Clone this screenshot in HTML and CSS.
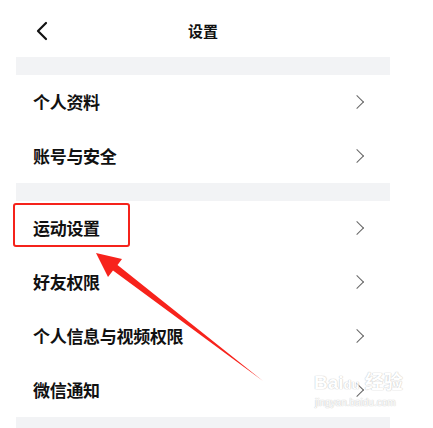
FILE: index.html
```html
<!DOCTYPE html>
<html lang="zh-CN">
<head>
    <meta charset="UTF-8">
    <meta name="viewport" content="width=device-width, initial-scale=1.0">
    <title>设置</title>
    <link rel="stylesheet" href="styles.css">
</head>
<body>
    <div class="pantalla">
        <div class="cabecera">
            <svg class="atras" width="14" height="20" viewBox="0 0 14 20">
                <path d="M11 2 L3 10 L11 18" fill="none" stroke="#111" stroke-width="2.2" stroke-linecap="round" stroke-linejoin="round"/>
            </svg>
            <span class="titulo">设置</span>
        </div>

        <div class="banda"></div>
        <div class="fila"><span>个人资料</span><i class="flecha"></i></div>
        <div class="fila"><span>账号与安全</span><i class="flecha"></i></div>

        <div class="banda"></div>
        <div class="fila"><span>运动设置</span><i class="flecha"></i></div>
        <div class="fila"><span>好友权限</span><i class="flecha"></i></div>
        <div class="fila"><span>个人信息与视频权限</span><i class="flecha"></i></div>
        <div class="fila"><span>微信通知</span><i class="flecha"></i></div>

        <div class="banda banda-final"></div>
    </div>

    <!-- marca roja encima de la captura -->
    <div class="marco"></div>
    <svg class="anotacion" width="433" height="428" viewBox="0 0 433 428">
        <polygon points="96,253 122,259 117.5,265 263,381 113,270.5 108,277" fill="#f7231c"/>
    </svg>

    <div class="marca-agua">
        <div class="marca-logo">Bai<span class="pata">du</span> 经验</div>
        <div class="marca-url">jingyan.baidu.com</div>
    </div>
</body>
</html>
```

FILE: styles.css
```css
body {
    margin: 0;
    background-color: #fff;
    font-family: "Noto Sans CJK SC", "Noto Sans", sans-serif;
    color: #111;
    width: 433px;
    height: 428px;
    overflow: hidden;
    position: relative;
}

.pantalla {
    width: 406px;
}

.cabecera {
    height: 57px;
    display: flex;
    align-items: center;
    justify-content: center;
    position: relative;
}

.atras {
    position: absolute;
    left: 35px;
    top: 21px;
}

.titulo {
    font-size: 15px;
    font-weight: bold;
    margin-top: 4px;
}

.banda {
    height: 18px;
    margin: 0 16px;
    background-color: #f2f3f5;
}

.banda-final {
    height: 14px;
}

.fila {
    height: 54px;
    display: flex;
    align-items: center;
    justify-content: space-between;
    padding: 0 44px 0 33px;
    font-size: 17px;
    font-weight: bold;
    letter-spacing: -0.3px;
}

.fila span {
    margin-top: -1px;
}

.flecha {
    width: 9px;
    height: 9px;
    border-top: 1.6px solid #666;
    border-right: 1.6px solid #666;
    transform: rotate(45deg);
}

.marco {
    position: absolute;
    left: 13px;
    top: 203px;
    width: 113px;
    height: 40px;
    border: 2.5px solid #f5231b;
    border-radius: 3px;
}

.anotacion {
    position: absolute;
    left: 0;
    top: 0;
}

.marca-agua {
    position: absolute;
    left: 314px;
    top: 372px;
    color: #fff;
    text-shadow: 0 0 1px #bbb, 0 0 1px #bbb;
    opacity: 0.8;
}

.marca-logo {
    font-family: "Liberation Sans", "Noto Sans CJK SC", sans-serif;
    font-size: 19px;
    font-weight: bold;
    line-height: 22px;
}

.pata {
    font-size: 13px;
}

.marca-url {
    font-family: "Liberation Sans", sans-serif;
    font-size: 10px;
    line-height: 14px;
    margin-left: 1px;
}
```
